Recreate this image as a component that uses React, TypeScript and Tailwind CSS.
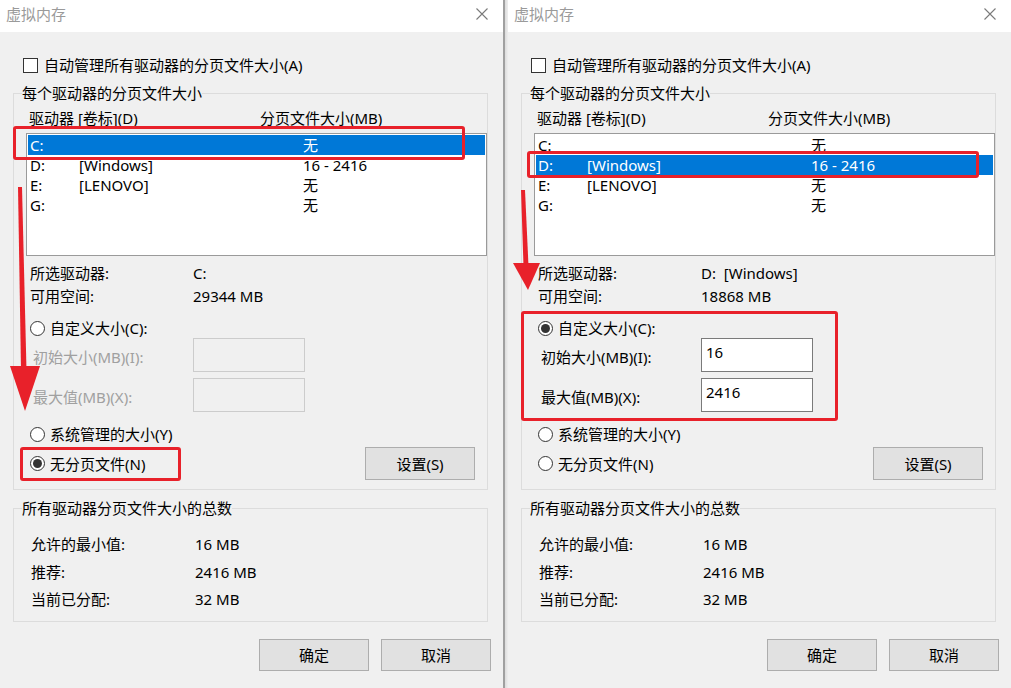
import React from "react";

interface Drive {
  letter: string;
  label: string;
  size: string;
}

interface DialogProps {
  selected: number;
  selectedText: string;
  freeSpace: string;
  mode: "custom" | "system" | "none";
  initial?: string;
  max?: string;
  marks: React.ReactNode;
}

const drives: Drive[] = [
  { letter: "C:", label: "", size: "无" },
  { letter: "D:", label: "[Windows]", size: "16 - 2416" },
  { letter: "E:", label: "[LENOVO]", size: "无" },
  { letter: "G:", label: "", size: "无" },
];

const Radio: React.FC<{ checked?: boolean; label: string }> = ({ checked, label }) => (
  <div className="flex h-[20px] items-center gap-[5px] pl-[4px]">
    <span className="flex h-[15px] w-[15px] shrink-0 items-center justify-center rounded-full border border-[#333] bg-white">
      {checked && <span className="h-[9px] w-[9px] rounded-full bg-[#333]" />}
    </span>
    <span className="leading-[20px]">{label}</span>
  </div>
);

const Button: React.FC<{ label: string; className?: string }> = ({ label, className }) => (
  <div
    className={`flex w-[110px] items-center justify-center border border-[#adadad] bg-[#e1e1e1] leading-[20px] ${className || ""}`}
  >
    {label}
  </div>
);

const SizeField: React.FC<{ label: string; value?: string; enabled: boolean; className?: string }> = ({
  label,
  value,
  enabled,
  className,
}) => (
  <div className={`flex items-start ${className || ""}`}>
    <span className={`mt-[9px] w-[167px] pl-[7px] leading-[20px] ${enabled ? "text-black" : "text-[#a0a0a0]"}`}>
      {label}
    </span>
    <div
      className={`h-[34px] w-[112px] border pl-[4px] pt-[3px] leading-[20px] ${
        enabled ? "border-[#7a7a7a] bg-white" : "border-[#cccccc] bg-[#f0f0f0]"
      }`}
    >
      {value}
    </div>
  </div>
);

const Dialog: React.FC<DialogProps> = ({ selected, selectedText, freeSpace, mode, initial, max, marks }) => {
  const custom = mode === "custom";
  return (
    <div className="relative flex h-full w-[503px] flex-col bg-[#f0f0f0]">
      {/* title bar */}
      <div className="flex h-[32px] items-start justify-between bg-white pl-[6px] pr-[15px] pt-[4px]">
        <span className="leading-[20px] text-[#9a9a9a]">虚拟内存</span>
        <svg className="mt-[4px]" width="12" height="12" viewBox="0 0 12 12">
          <path d="M0.5 0.5 L11.5 11.5 M11.5 0.5 L0.5 11.5" stroke="#7a7a7a" strokeWidth="1.1" fill="none" />
        </svg>
      </div>

      <div className="flex flex-col px-[13px]">
        <div className="ml-[10px] mt-[23px] flex h-[20px] items-center gap-[6px]">
          <span className="h-[15px] w-[15px] shrink-0 border border-[#333] bg-white" />
          <span className="leading-[20px]">自动管理所有驱动器的分页文件大小(A)</span>
        </div>

        <fieldset className="mt-[8px] w-[475px] border border-[#dcdcdc] p-0 pb-[9px]">
          <legend className="ml-[8px] leading-[20px]">每个驱动器的分页文件大小</legend>
          <div className="flex flex-col pl-[12px]">
            <div className="mt-[5px] flex h-[20px] leading-[20px]">
              <span className="w-[234px] pl-[3px]">驱动器 [卷标](D)</span>
              <span>分页文件大小(MB)</span>
            </div>

            <div className="mt-[5px] h-[123px] w-[461px] border border-[#9a9a9a] bg-white p-[1px]">
              {drives.map((d, i) => (
                <div
                  key={d.letter}
                  className={`flex h-[20px] items-center pl-[2px] leading-[20px] ${
                    i === selected ? "bg-[#0078d7] text-white" : ""
                  }`}
                >
                  <span className="w-[49px]">{d.letter}</span>
                  <span className="w-[224px]">{d.label}</span>
                  <span>{d.size}</span>
                </div>
              ))}
            </div>

            <div className="mt-[7px] flex pl-[4px] leading-[20px]">
              <span className="w-[163px]">所选驱动器:</span>
              <span className="whitespace-pre">{selectedText}</span>
            </div>
            <div className="mt-[3px] flex pl-[4px] leading-[20px]">
              <span className="w-[163px]">可用空间:</span>
              <span>{freeSpace}</span>
            </div>

            <div className="mt-[12px]">
              <Radio checked={custom} label="自定义大小(C):" />
            </div>
            <SizeField label="初始大小(MB)(I):" value={initial} enabled={custom} />
            <SizeField label="最大值(MB)(X):" value={max} enabled={custom} className="mt-[6px]" />

            <div className="mt-[12px]">
              <Radio checked={mode === "system"} label="系统管理的大小(Y)" />
            </div>
            <div className="mt-[3px] flex h-[33px] items-center justify-between">
              <Radio checked={mode === "none"} label="无分页文件(N)" />
              <Button label="设置(S)" className="mr-[12px] h-[33px]" />
            </div>
          </div>
        </fieldset>

        <fieldset className="mt-[8px] w-[475px] border border-[#dcdcdc] p-0 pb-[12px]">
          <legend className="ml-[8px] leading-[20px]">所有驱动器分页文件大小的总数</legend>
          <div className="flex flex-col pl-[17px] leading-[20px]">
            <div className="mt-[16px] flex">
              <span className="w-[164px]">允许的最小值:</span>
              <span>16 MB</span>
            </div>
            <div className="mt-[8px] flex">
              <span className="w-[164px]">推荐:</span>
              <span>2416 MB</span>
            </div>
            <div className="mt-[7px] flex">
              <span className="w-[164px]">当前已分配:</span>
              <span>32 MB</span>
            </div>
          </div>
        </fieldset>

        <div className="-mr-[1px] mt-[17px] flex justify-end gap-[12px]">
          <Button label="确定" className="h-[32px]" />
          <Button label="取消" className="h-[32px]" />
        </div>
      </div>

      {marks}
    </div>
  );
};

const RED = "#e8212a";

const Box: React.FC<{ className: string }> = ({ className }) => (
  <div className={`pointer-events-none absolute rounded-[3px] border-[3px] border-[#e8212a] ${className}`} />
);

export default function App() {
  return (
    <div className="flex h-[688px] w-[1011px] overflow-hidden bg-[#f0f0f0] font-['Noto_Sans','Noto_Sans_CJK_SC',sans-serif] text-[15px] text-black">
      <Dialog
        selected={0}
        selectedText="C:"
        freeSpace="29344 MB"
        mode="none"
        marks={
          <>
            <Box className="left-[13px] top-[126px] h-[34px] w-[452px]" />
            <Box className="left-[20px] top-[447px] h-[34px] w-[161px]" />
            <svg className="pointer-events-none absolute left-0 top-0" width="503" height="688">
              <polygon points="18,187 22,187 26.5,370 21,370" fill={RED} />
              <polygon points="10,366 40,366 25,411" fill={RED} />
            </svg>
          </>
        }
      />

      <div className="flex w-[5px]">
        <div className="w-[2px] bg-[#a0a0a0]" />
        <div className="flex-1 bg-gradient-to-r from-[#dcdcdc] to-[#eeeeee]" />
      </div>

      <Dialog
        selected={1}
        selectedText="D:  [Windows]"
        freeSpace="18868 MB"
        mode="custom"
        initial="16"
        max="2416"
        marks={
          <>
            <Box className="left-[19px] top-[151px] h-[27px] w-[452px]" />
            <Box className="left-[13px] top-[311px] h-[110px] w-[317px]" />
            <svg className="pointer-events-none absolute left-0 top-0" width="503" height="688">
              <polygon points="13,190 17,190 20.5,266 15.5,266" fill={RED} />
              <polygon points="5,263 32,263 20,290" fill={RED} />
            </svg>
          </>
        }
      />
    </div>
  );
}
